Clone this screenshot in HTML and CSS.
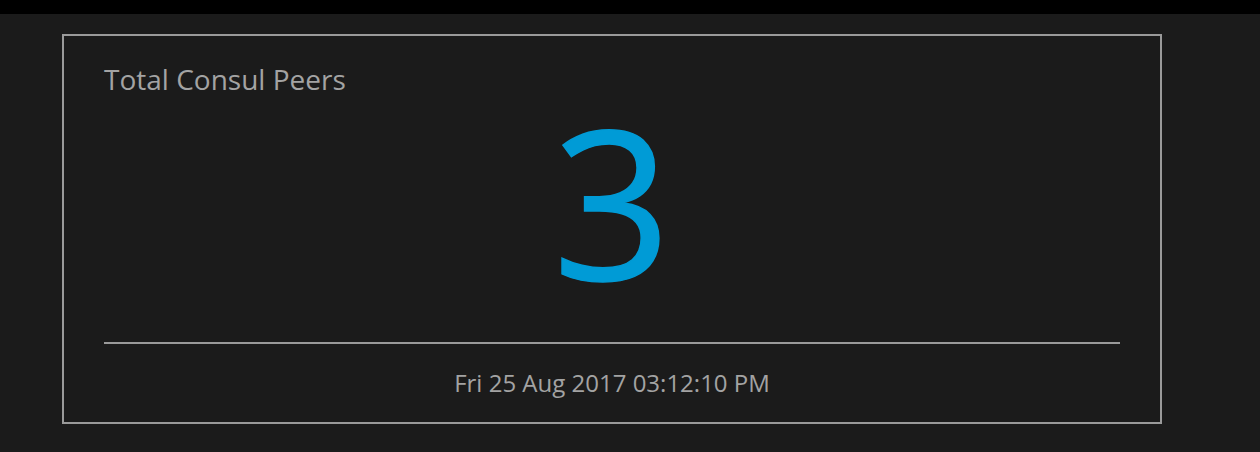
FILE: index.html
```html
<!DOCTYPE html>
<html>
<head>
<meta charset="utf-8">
<link rel="stylesheet" href="styles.css">
</head>
<body>
<div class="topbar"></div>
<main class="page">
  <section class="card">
    <h2 class="card-title">Total Consul Peers</h2>
    <div class="card-value">3</div>
    <hr class="card-rule">
    <div class="card-date">Fri 25 Aug 2017 03:12:10 PM</div>
  </section>
</main>
</body>
</html>
```
FILE: styles.css
```css
html, body {
  margin: 0;
  padding: 0;
  background: #1b1b1b;
  font-family: "Open Sans", "Noto Sans", sans-serif;
  height: 100%;
  overflow: hidden;
}
.topbar {
  height: 14px;
  background: #000;
}
.page {
  padding: 20px 0 0 62px;
}
.card {
  box-sizing: border-box;
  width: 1100px;
  height: 390px;
  border: 2px solid #9a9a9a;
  padding: 0 40px;
  display: flex;
  flex-direction: column;
}
.card-title {
  margin: 29px 0 0 0;
  font-size: 28px;
  line-height: 28px;
  font-weight: 400;
  color: #a3a3a3;
}
.card-value {
  margin-top: 4px;
  font-size: 207px;
  line-height: 207px;
  text-align: center;
  color: #009bd6;
  -webkit-text-stroke: 1.5px #009bd6;
}
.card-rule {
  margin: 38px 0 0 0;
  border: 0;
  height: 2px;
  background: #9a9a9a;
}
.card-date {
  margin-top: 27px;
  font-size: 24px;
  line-height: 24px;
  text-align: center;
  color: #a3a3a3;
}
```
